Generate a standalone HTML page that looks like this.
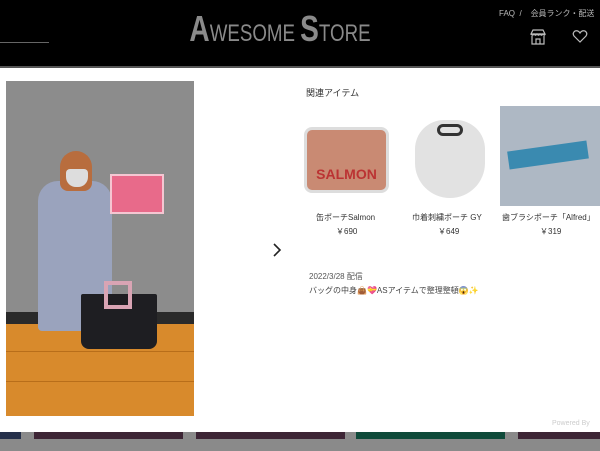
<!DOCTYPE html>
<html><head><meta charset="utf-8"><style>
*{margin:0;padding:0;box-sizing:border-box}
body{width:600px;height:451px;overflow:hidden;background:#8a8a8a;font-family:"Liberation Sans","Noto Sans CJK JP",sans-serif;position:relative}
.hdr{position:absolute;left:0;top:0;width:600px;height:66px;background:#000}
.line{position:absolute;left:0;top:42px;width:49px;height:1px;background:#666}
.logo{position:absolute;left:160px;top:8px;width:240px;text-align:center;color:#8a8a8a;font-family:"Liberation Sans",sans-serif;font-size:24px;white-space:nowrap;transform:scaleX(0.78);transform-origin:center}
.logo b{font-size:36px;font-weight:bold}
.nav{position:absolute;left:499px;top:8px;color:#bbb;font-size:8px;white-space:nowrap}
.sep{position:absolute;left:0;top:66px;width:600px;height:2px;background:#555}
.modal{position:absolute;left:0;top:68px;width:600px;height:364px;background:#fff}
.photo{position:absolute;left:6px;top:81px;width:188px;height:335px;background:#8c8c8c;overflow:hidden}
.t{position:absolute;color:#333;font-size:8px;white-space:nowrap}
.bottom{position:absolute;top:432px;height:7px}
</style></head><body>
<div class="hdr"></div>
<div class="line"></div>
<div class="logo"><b>A</b>WESOME <b>S</b>TORE</div>
<div class="nav">FAQ &nbsp;/ &nbsp;&nbsp; 会員ランク・配送</div>
<svg style="position:absolute;left:529px;top:28px" width="18" height="18" viewBox="0 0 18 18" fill="none" stroke="#bbb" stroke-width="1.2"><path d="M2 6 L4 2 H14 L16 6 Z M2 6 Q3.5 8.5 5 6 Q6.5 8.5 8 6 Q9.5 8.5 11 6 Q12.5 8.5 14 6 Q15.5 8.5 16 6 M3 8 V16 H15 V8 M7 16 V11 H11 V16"/></svg>
<svg style="position:absolute;left:572px;top:29px" width="16" height="15" viewBox="0 0 16 15" fill="none" stroke="#bbb" stroke-width="1.2"><path d="M8 13 L2 7 Q0 4 3 2 Q6 1 8 4 Q10 1 13 2 Q16 4 14 7 Z"/></svg>
<div class="sep"></div>
<div class="modal"></div>
<div class="photo">
 <div style="position:absolute;left:0;top:231px;width:188px;height:12px;background:#2a2a2a"></div>
 <div style="position:absolute;left:0;top:243px;width:188px;height:92px;background:#d88a2c"></div>
 <div style="position:absolute;left:0;top:270px;width:188px;height:1px;background:#b86e1a"></div>
 <div style="position:absolute;left:0;top:300px;width:188px;height:1px;background:#b86e1a"></div>
 <div style="position:absolute;left:32px;top:100px;width:74px;height:150px;background:#9aa3bd;border-radius:20px 20px 4px 4px"></div>
 <div style="position:absolute;left:54px;top:70px;width:32px;height:40px;background:#b86d3e;border-radius:16px 16px 8px 8px"></div>
 <div style="position:absolute;left:60px;top:88px;width:22px;height:18px;background:#ddd;border-radius:4px 4px 10px 10px"></div>
 <div style="position:absolute;left:104px;top:93px;width:54px;height:40px;background:#e86a8a;border:2px solid #f5c6d2"></div>
 <div style="position:absolute;left:75px;top:213px;width:76px;height:55px;background:#1e1e22;border-radius:2px 2px 8px 8px"></div>
 <div style="position:absolute;left:98px;top:200px;width:28px;height:28px;border:4px solid #d9a4b4"></div>
</div>
<div class="t" style="left:306px;top:86px;font-size:9px">関連アイテム</div>
<div style="position:absolute;left:304px;top:127px;width:85px;height:66px;background:#c98a73;border-radius:8px;border:3px solid #ddd"><div style="color:#b33;font-weight:bold;font-size:14px;margin-top:36px;text-align:center">SALMON</div></div>
<div style="position:absolute;left:415px;top:120px;width:70px;height:78px;background:#e2e2e2;border-radius:30px 30px 36px 36px"><div style="position:absolute;left:22px;top:4px;width:26px;height:12px;border:3px solid #333;border-radius:6px"></div></div>
<div style="position:absolute;left:500px;top:106px;width:100px;height:100px;background:#aeb8c4"><div style="position:absolute;left:8px;top:40px;width:80px;height:18px;background:#3a8ab0;transform:rotate(-8deg)"></div></div>
<div class="t" style="left:316px;top:212px">缶ポーチSalmon</div>
<div class="t" style="left:336px;top:226px">￥690</div>
<div class="t" style="left:412px;top:212px">巾着刺繍ポーチ GY</div>
<div class="t" style="left:438px;top:226px">￥649</div>
<div class="t" style="left:502px;top:212px">歯ブラシポーチ「Alfred」</div>
<div class="t" style="left:540px;top:226px">￥319</div>
<svg style="position:absolute;left:272px;top:243px" width="10" height="14" viewBox="0 0 10 14" fill="none" stroke="#222" stroke-width="1.6"><path d="M2 1 L8 7 L2 13"/></svg>
<div class="t" style="left:309px;top:271px;color:#555">2022/3/28 配信</div>
<div class="t" style="left:309px;top:285px;color:#444">バッグの中身👜💝ASアイテムで整理整頓😱✨</div>
<div class="t" style="left:552px;top:420px;color:#ccc;font-size:7px">Powered By</div>
<div class="bottom" style="left:0;width:21px;background:#25304a"></div>
<div class="bottom" style="left:34px;width:149px;background:#3d2535"></div>
<div class="bottom" style="left:196px;width:149px;background:#3d2535"></div>
<div class="bottom" style="left:356px;width:149px;background:#0f4a3a"></div>
<div class="bottom" style="left:518px;width:82px;background:#3d2535"></div>
</body></html>
